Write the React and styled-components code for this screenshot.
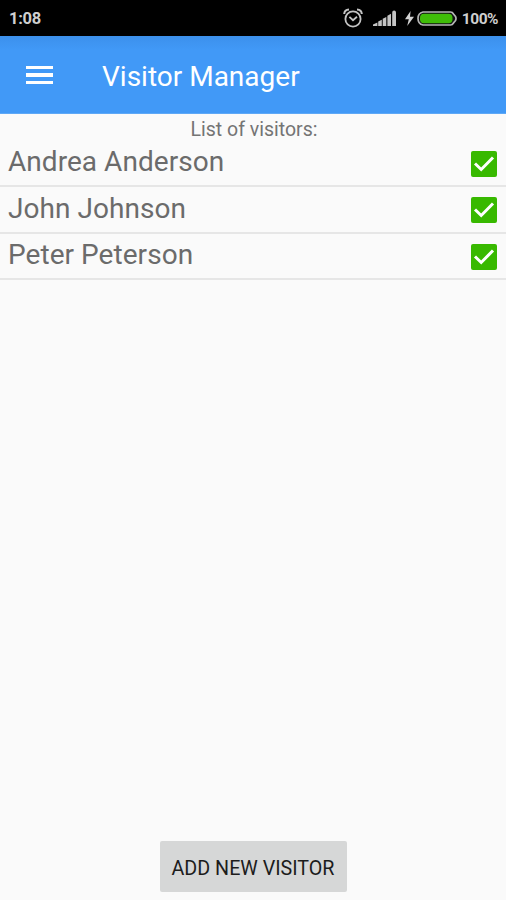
import React, { useState } from "react";
import styled, { createGlobalStyle } from "styled-components";

const GlobalStyle = createGlobalStyle`
  * {
    box-sizing: border-box;
  }

  body {
    margin: 0;
    background-color: #fafafa;
    font-family: Roboto, sans-serif;
  }
`;

const Screen = styled.div`
  display: flex;
  flex-direction: column;
  height: 900px;
  background-color: #fafafa;
`;

const StatusBar = styled.div`
  display: flex;
  align-items: center;
  justify-content: space-between;
  height: 36px;
  padding: 0 8px 0 9px;
  background-color: #000;
  color: #cfcfcf;
`;

const StatusText = styled.span`
  padding-top: 2px;
  font-size: ${(props) => props.$size};
  font-weight: 700;
  letter-spacing: ${(props) => props.$spacing || "0"};
  line-height: 20px;
`;

const StatusIcons = styled.div`
  display: flex;
  align-items: center;
`;

const StatusIcon = styled.svg`
  display: block;
  margin-right: ${(props) => props.$gap};
`;

const AppBar = styled.header`
  display: flex;
  align-items: center;
  height: 78px;
  padding: 4px 26px 0;
  background: linear-gradient(to bottom, #3c90ec, #4199f7 14px);
  border-bottom: 1px solid #5ea8f6;
`;

const MenuButton = styled.button`
  display: flex;
  flex-direction: column;
  gap: 4px;
  width: 27px;
  margin: 0 49px 3px 0;
  padding: 0;
  border: none;
  background: none;
  cursor: pointer;
`;

const MenuLine = styled.span`
  width: 27px;
  height: 3.6px;
  background-color: #fff;
`;

const Title = styled.h1`
  margin: 0;
  color: #fff;
  font-size: 28px;
  font-weight: 400;
  line-height: 34px;
`;

const Caption = styled.p`
  margin: 0;
  padding: 3px 0 0 2px;
  height: 26.4px;
  color: #747474;
  font-size: 19.5px;
  line-height: 25px;
  text-align: center;
`;

const VisitorList = styled.ul`
  flex: 1;
  margin: 0;
  padding: 0;
  list-style: none;
`;

const VisitorRow = styled.li`
  display: flex;
  align-items: flex-start;
  justify-content: space-between;
  height: 46.6px;
  padding: 4.6px 9px 0 8px;
  border-bottom: 2px solid #e6e6e6;
`;

const VisitorName = styled.span`
  color: #6b6b6b;
  font-size: 28px;
  line-height: 34px;
  letter-spacing: 0.05px;
`;

const Checkbox = styled.button`
  width: 26px;
  height: 26px;
  margin-top: 5.6px;
  padding: 0;
  border: none;
  border-radius: 2px;
  background-color: ${(props) => (props.$checked ? "#38b900" : "#c8c8c8")};
  cursor: pointer;
`;

const CheckMark = styled.svg`
  display: block;
`;

const Footer = styled.footer`
  display: flex;
  justify-content: center;
  padding: 0 0 8px;
`;

const AddButton = styled.button`
  width: 187px;
  height: 51px;
  padding: 3px 0 0;
  border: none;
  border-radius: 2px;
  background-color: #d6d7d7;
  color: #1c1c1c;
  font-family: inherit;
  font-size: 19.7px;
  white-space: nowrap;
  cursor: pointer;
`;

const AlarmIcon = () => (
  <StatusIcon $gap="10px" width="20" height="20" viewBox="0 0 20 20" fill="none" stroke="#c4c4c4">
    <circle cx="10" cy="11" r="7.6" strokeWidth="1.8" />
    <path d="M1.2 6Q1.4 1.8 6 1.5M18.8 6Q18.6 1.8 14 1.5" strokeWidth="2" />
    <path d="M6.4 8.8 10 12.2 14 8.8" strokeWidth="1.8" />
  </StatusIcon>
);

const SignalIcon = () => (
  <StatusIcon $gap="9px" width="23" height="16" viewBox="0 0 23 16" fill="#c4c4c4">
    <path d="M0 16v-1.6l4.4-2V16zM5.2 16v-4.4l3.6-1.8V16zM9.7 16V8.8l3.6-1.9V16zM14.4 16V5.8l3.6-2V16zM19.2 16V2.6Q19.2.5 21.1.5T23 2.4V16z" />
  </StatusIcon>
);

const BoltIcon = () => (
  <StatusIcon $gap="3px" width="9" height="15" viewBox="0 0 9 15" fill="#d2d2d2">
    <path d="M5.6 0 0 8.2h3.8L2.2 15 9 5.8H5z" />
  </StatusIcon>
);

const BatteryIcon = () => (
  <StatusIcon $gap="5px" width="40" height="15" viewBox="0 0 40 15">
    <path
      d="M6 1h27.5Q35.500 1 36.500 3L38.500 5.500Q39.500 7.500 38.500 9.500L36.500 12Q35.500 14 33.500 14H6Q1 13 1 7.500T6 1z"
      fill="#111"
      stroke="#b5b5b5"
      strokeWidth="1.7"
    />
    <rect x="3" y="2.7" width="32.5" height="9.600" rx="4" fill="#3fbd08" />
  </StatusIcon>
);

const initialVisitors = [
  { name: "Andrea Anderson", checked: true },
  { name: "John Johnson", checked: true },
  { name: "Peter Peterson", checked: true },
];

const App = () => {
  const [visitors, setVisitors] = useState(initialVisitors);

  const toggleVisitor = (name) => {
    setVisitors((prevVisitors) =>
      prevVisitors.map((visitor) =>
        visitor.name === name ? { ...visitor, checked: !visitor.checked } : visitor
      )
    );
  };

  return (
    <Screen>
      <GlobalStyle />
      <StatusBar>
        <StatusText $size="16.5px" $spacing="-0.25px">1:08</StatusText>
        <StatusIcons>
          <AlarmIcon />
          <SignalIcon />
          <BoltIcon />
          <BatteryIcon />
          <StatusText $size="15.5px" $spacing="-0.5px">100%</StatusText>
        </StatusIcons>
      </StatusBar>
      <AppBar>
        <MenuButton aria-label="Menu">
          <MenuLine />
          <MenuLine />
          <MenuLine />
        </MenuButton>
        <Title>Visitor Manager</Title>
      </AppBar>
      <Caption>List of visitors:</Caption>
      <VisitorList>
        {visitors.map((visitor) => (
          <VisitorRow key={visitor.name}>
            <VisitorName>{visitor.name}</VisitorName>
            <Checkbox
              role="checkbox"
              aria-checked={visitor.checked}
              aria-label={visitor.name}
              $checked={visitor.checked}
              onClick={() => toggleVisitor(visitor.name)}
            >
              {visitor.checked && (
                <CheckMark width="26" height="26" viewBox="0 0 26 26" fill="none">
                  <path d="M4 12.5 10.2 18.5 22 6.5" stroke="#fff" strokeWidth="3" />
                </CheckMark>
              )}
            </Checkbox>
          </VisitorRow>
        ))}
      </VisitorList>
      <Footer>
        <AddButton>ADD NEW VISITOR</AddButton>
      </Footer>
    </Screen>
  );
};

export default App;
